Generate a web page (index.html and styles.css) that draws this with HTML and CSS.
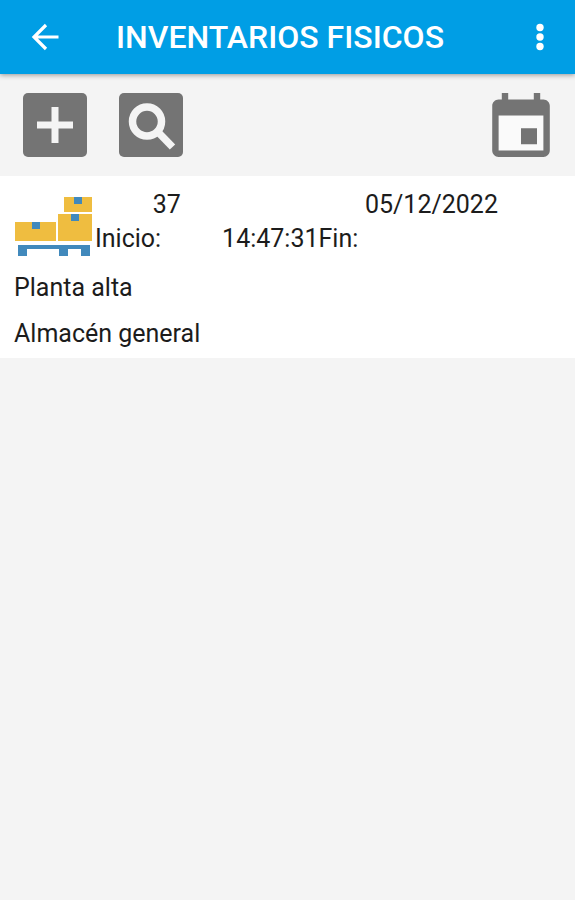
FILE: index.html
```html
<!DOCTYPE html>
<html lang="es">
<head>
<meta charset="utf-8">
<meta name="viewport" content="width=device-width, initial-scale=1">
<title>Inventarios fisicos</title>
<link rel="stylesheet" href="styles.css">
</head>
<body>
<header class="appbar">
  <button class="icon-button" type="button" aria-label="Volver">
    <svg width="40" height="40" viewBox="0 0 40 40"><path d="M21 8 9 20l12 12M9.500 20H33.500" fill="none" stroke="#fff" stroke-width="3.200"/></svg>
  </button>
  <h1 class="title">INVENTARIOS FISICOS</h1>
  <button class="icon-button" type="button" aria-label="Más opciones">
    <svg width="40" height="40" viewBox="0 0 40 40" fill="#fff"><circle cx="20" cy="10.500" r="3.700"/><circle cx="20" cy="20" r="3.700"/><circle cx="20" cy="29.500" r="3.700"/></svg>
  </button>
</header>
<div class="toolbar">
  <button class="icon-button" type="button" aria-label="Agregar">
    <svg width="64" height="64" viewBox="0 0 64 64"><rect width="64" height="64" rx="5" fill="#747474"/><path d="M32 14v36M14 32h36" stroke="#f4f4f4" stroke-width="7"/></svg>
  </button>
  <button class="icon-button" type="button" aria-label="Buscar">
    <svg width="64" height="64" viewBox="0 0 64 64"><rect width="64" height="64" rx="5" fill="#747474"/><g fill="none" stroke="#f4f4f4"><circle cx="28" cy="28.500" r="14.500" stroke-width="7.500"/><path d="M37.500 37.500 53.500 54" stroke-width="7.500"/></g></svg>
  </button>
  <button class="icon-button calendar" type="button" aria-label="Calendario">
    <svg width="58" height="64" viewBox="3 1 18 20"><path d="M5 8h14v11H5z" fill="#fafafa"/><path fill="#747474" d="M17 12h-5v5h5v-5zM16 1v2H8V1H6v2H5c-1.110 0-1.990.9-1.990 2L3 19c0 1.100.89 2 2 2h14c1.100 0 2-.9 2-2V5c0-1.100-.9-2-2-2h-1V1h-2zm3 18H5V8h14v11z"/></svg>
  </button>
</div>
<main>
  <article class="item">
    <div class="summary">
      <svg class="pallet" width="81" height="66" viewBox="-1 0 81 66" role="img" aria-label="Cajas en palé">
        <g fill="#efbd40"><path d="M49 4h28v15H49zM43 21h34v27H43zM0 29h41v19H0z"/></g>
        <path fill="#4189bc" d="M59 4h8v7h-8zM56 21h8v7h-8zM17 29h8v7h-8zM3 52h72v11h-9v-7H53v7h-9v-7H12v7H3z"/>
      </svg>
      <div class="details">
        <div class="line">
          <span class="number">37</span>
          <span class="date">05/12/2022</span>
        </div>
        <div class="line">
          <span class="label">Inicio:</span>
          <span class="time">14:47:31</span>
          <span class="end">Fin:</span>
        </div>
      </div>
    </div>
    <p class="place">Planta alta</p>
    <p class="place">Almacén general</p>
  </article>
</main>
</body>
</html>
```
FILE: styles.css
```css
* {
  box-sizing: border-box;
}

body {
  margin: 0;
  background: #f4f4f4;
  color: #1c1c1c;
  font-family: Roboto, "Liberation Sans", sans-serif;
  font-size: 25px;
  line-height: 34px;
}

.icon-button {
  display: flex;
  padding: 0;
  border: 0;
  background: none;
  cursor: pointer;
}

.appbar {
  display: flex;
  align-items: center;
  padding: 16px 15px 16px 25px;
  background: #009ee5;
  box-shadow: 0 1px 5px rgba(0, 0, 0, 0.4);
}

.title {
  flex: 1;
  margin: 0;
  padding-left: 51px;
  color: #fff;
  font-size: 32px;
  font-weight: 500;
  line-height: 42px;
}

.toolbar {
  display: flex;
  gap: 32px;
  padding: 19px 25px 19px 23px;
}

.calendar {
  margin-left: auto;
}

.item {
  padding: 12px 14px 7px;
  background: #fff;
}

.summary {
  display: flex;
  margin-bottom: 12px;
}

.pallet {
  flex: none;
  margin-top: 5px;
}

.details {
  flex: 1;
}

.line {
  display: grid;
  grid-template-columns: 86fr 138fr 243fr;
}

.number {
  text-align: right;
}

.date {
  grid-column: 3;
  padding-right: 63px;
  text-align: right;
}

.time {
  text-align: right;
}

.place {
  margin: 0 0 12px;
}

.place:last-child {
  margin-bottom: 0;
}
```
